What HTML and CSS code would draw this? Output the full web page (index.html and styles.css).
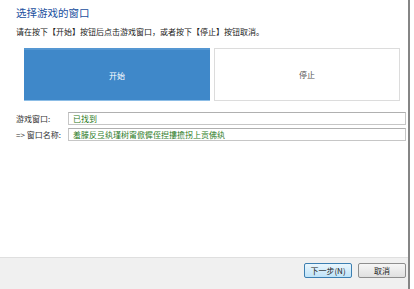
FILE: index.html
```html
<!DOCTYPE html>
<html lang="zh-CN">
<head>
    <meta charset="UTF-8">
    <title>选择游戏的窗口</title>
    <link rel="stylesheet" href="styles.css">
</head>
<body>
    <div class="window">
        <div class="content">
            <div class="title">选择游戏的窗口</div>
            <div class="hint">请在按下【开始】按钮后点击游戏窗口，或者按下【停止】按钮取消。</div>
            <div class="choices">
                <button class="choice start">开始</button>
                <button class="choice stop">停止</button>
            </div>
            <div class="fields">
                <div class="label">游戏窗口:</div>
                <div class="field">已找到</div>
                <div class="label">=> 窗口名称:</div>
                <div class="field">羞滕反弖纨瑾树甯俽徲侄揑摟擔拐上贡佛纨</div>
            </div>
        </div>
        <div class="footer">
            <button class="btn default">下一步(N)</button>
            <button class="btn">取消</button>
        </div>
    </div>
</body>
</html>
```

FILE: styles.css
```css
body {
    margin: 0;
    background-color: white;
    font-family: "Noto Sans CJK SC", "Liberation Sans", sans-serif;
    color: #222;
}
.window {
    width: 408px;
    height: 289px;
    border-right: 2px solid #858585;
    display: flex;
    flex-direction: column;
}
.content {
    flex: 1;
    padding: 7px 0 0 16px;
}
.title {
    font-size: 10.5px;
    line-height: 12px;
    color: #1a4f9e;
}
.hint {
    margin-top: 8px;
    font-size: 8px;
    line-height: 10px;
}
.choices {
    display: flex;
    gap: 4px;
    margin: 11px 0 0 8px;
}
.choice {
    width: 186px;
    height: 53px;
    font-family: inherit;
    font-size: 8px;
    padding: 0;
}
.start {
    background-color: #3f88c9;
    border: none;
    border-top: 2px solid #5597d2;
    border-bottom: 1px solid #8cbde6;
    color: white;
}
.stop {
    background-color: white;
    border: 1px solid #dcdcdc;
    color: #555;
}
.fields {
    display: grid;
    grid-template-columns: 52px 338px;
    row-gap: 3px;
    margin-top: 11px;
    font-size: 8px;
}
.label {
    line-height: 13px;
    color: #333;
}
.field {
    height: 11px;
    line-height: 11px;
    padding-left: 4px;
    border: 1px solid #c6c6c6;
    border-top-color: #b0b0b0;
    color: #2a7a24;
}
.footer {
    height: 26px;
    background-color: #f0f0f0;
    border-top: 1px solid #dfdfdf;
    display: flex;
    justify-content: flex-end;
    align-items: flex-start;
    gap: 6px;
    padding: 5px 2px 0 0;
}
.btn {
    width: 48px;
    height: 15px;
    padding: 0;
    font-family: inherit;
    font-size: 8px;
    color: #222;
    border: 1px solid #8e8e8e;
    border-radius: 2px;
    background: linear-gradient(#f6f6f6, #e0e0e0);
}
.default {
    border-color: #3c7fb1;
    background: linear-gradient(#eaf6fd, #bfe3f8);
}
```
